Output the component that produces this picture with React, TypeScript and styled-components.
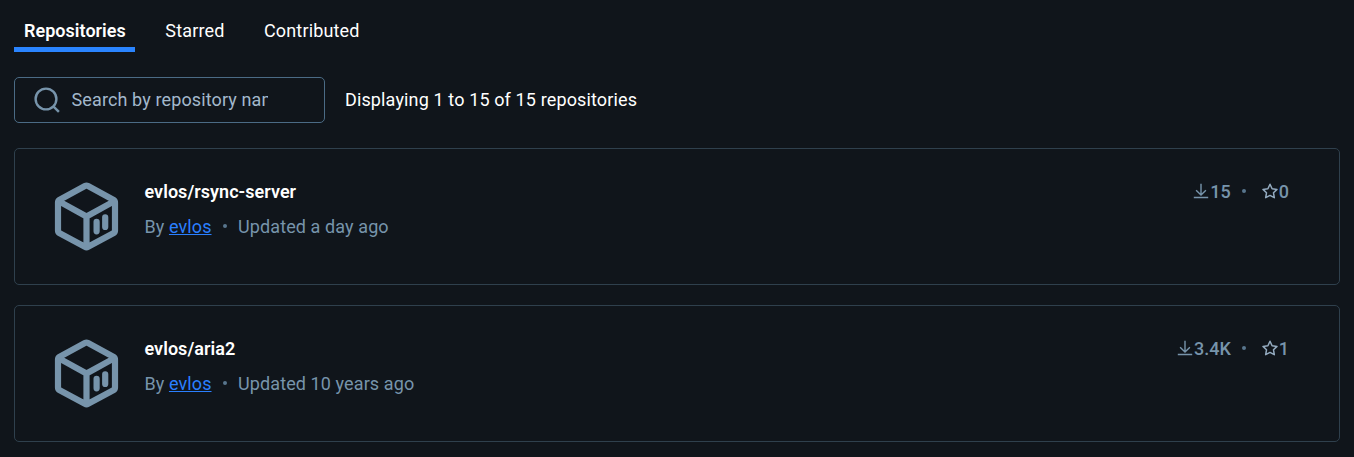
import React from "react";
import styled, { createGlobalStyle } from "styled-components";

const GlobalStyle = createGlobalStyle`
  * { box-sizing: border-box; }
  body {
    margin: 0;
    background: #10151b;
    color: #fff;
    font-family: Roboto, "Liberation Sans", sans-serif;
    font-size: 18px;
    line-height: 25px;
  }
`;

const Page = styled.main`
  height: 457px;
  padding: 0 14px;
  overflow: hidden;
`;

const Tabs = styled.nav`
  display: flex;
  gap: 20px;
  height: 52px;
`;

const Tab = styled.button<{ $active?: boolean }>`
  height: 52px;
  padding: 14px 9.5px 0 10px;
  border: 0;
  border-bottom: 5px solid ${(p) => (p.$active ? "#2a84ff" : "transparent")};
  background: none;
  color: #fff;
  font: inherit;
  font-weight: ${(p) => (p.$active ? 600 : 450)};
  letter-spacing: ${(p) => (p.$active ? "0.03px" : "0.15px")};
  white-space: nowrap;
`;

const Toolbar = styled.div`
  display: flex;
  align-items: center;
  gap: 20px;
  margin: 25px 0;
`;

const SearchBox = styled.label`
  display: flex;
  align-items: center;
  gap: 11.5px;
  width: 311px;
  height: 46px;
  padding: 0 56.5px 0 18px;
  border: 1px solid #4b6b85;
  border-radius: 5px;
`;

const SearchInput = styled.input`
  flex: 1;
  min-width: 0;
  padding: 0 0 2px;
  border: 0;
  outline: 0;
  background: none;
  color: #fff;
  font: inherit;
  letter-spacing: 0.12px;
  &::placeholder { color: #a3b8cc; opacity: 1; }
`;

const Summary = styled.span`
  padding-bottom: 2px;
  font-weight: 450;
  letter-spacing: 0.13px;
`;

const List = styled.section`
  display: flex;
  flex-direction: column;
  gap: 20px;
`;

const Card = styled.article`
  display: flex;
  height: 137px;
  padding: 30px 50px 0 35px;
  border: 1px solid #2f404d;
  border-radius: 5px;
`;

const Details = styled.div`
  flex: 1;
  margin-left: 20.5px;
`;

const Name = styled.h2`
  margin: 0 0 10px;
  font-size: inherit;
  font-weight: 600;
  letter-spacing: 0.04px;
`;

const Meta = styled.div`
  display: flex;
  color: #7794ab;
  letter-spacing: 0.1px;
`;

const Owner = styled.a`
  margin-left: 4.5px;
  color: #2a7fff;
  text-decoration: underline;
`;

const Dot = styled.i<{ $left: number; $right: number }>`
  width: 4px;
  height: 4px;
  margin: 10px ${(p) => p.$right}px 0 ${(p) => p.$left}px;
  border-radius: 50%;
  background: #58758d;
`;

const Stats = styled.div`
  display: flex;
  color: #7794ab;
  font-weight: 500;
`;

const Stat = styled.span`
  display: flex;
  height: 25px;
  svg { margin-top: 4px; }
`;

const SearchIcon = () => (
  <svg width="27" height="28" viewBox="0 0 27 28" fill="none" stroke="#7794ab" strokeWidth="2.4">
    <circle cx="13" cy="13" r="10.4" />
    <path d="m20.3 20.3 5.6 5.6" />
  </svg>
);

const CubeIcon = () => (
  <svg width="74" height="74" viewBox="0 0 74 74" fill="none" stroke="#7794ab" strokeLinejoin="round" strokeLinecap="round">
    <path
      strokeWidth="6.2"
      d="M34.9 7.1 9.7 20.7Q8 21.7 8 23.6V51.5Q8 53.3 9.7 54.3L34.9 67.8Q36.5 68.7 38.1 67.8L63.3 54.3Q65 53.3 65 51.5V23.6Q65 21.7 63.3 20.7L38.1 7.1Q36.5 6.3 34.9 7.1ZM9.5 22.6 36.5 37.5 63.5 22.6M36.5 37.5V67"
    />
    <path strokeWidth="6.2" d="M46.6 42.8V52.3M55.2 38.3V47.9" />
  </svg>
);

const DownloadIcon = () => (
  <svg width="17" height="17" viewBox="0 0 17 17" fill="none" stroke="currentColor" strokeWidth="1.4">
    <path d="M8 .8v11M3.1 7.2 8 12l4.9-4.8M.8 14.5h14.4" />
  </svg>
);

const StarIcon = () => (
  <svg width="17" height="17" viewBox="0 0 17 17" fill="none" stroke="#94abc0" strokeWidth="1.5" strokeLinejoin="round">
    <path d="m8 1.3 2.1 4.4 4.9.7-3.5 3.4.8 4.9L8 12.4l-4.3 2.3.8-4.9L1 6.4l4.9-.7z" />
  </svg>
);

const repositories = [
  { name: "evlos/rsync-server", updated: "Updated a day ago", pulls: "15", stars: "0" },
  { name: "evlos/aria2", updated: "Updated 10 years ago", pulls: "3.4K", stars: "1" },
];

export default function App() {
  return (
    <Page>
      <GlobalStyle />
      <Tabs>
        <Tab $active>Repositories</Tab>
        <Tab>Starred</Tab>
        <Tab>Contributed</Tab>
      </Tabs>
      <Toolbar>
        <SearchBox>
          <SearchIcon />
          <SearchInput placeholder="Search by repository name" />
        </SearchBox>
        <Summary>Displaying 1 to 15 of 15 repositories</Summary>
      </Toolbar>
      <List>
        {repositories.map((repo) => (
          <Card key={repo.name}>
            <CubeIcon />
            <Details>
              <Name>{repo.name}</Name>
              <Meta>
                <span>By</span>
                <Owner>evlos</Owner>
                <Dot $left={11} $right={11.5} />
                <span>{repo.updated}</span>
              </Meta>
            </Details>
            <Stats>
              <Stat>
                <DownloadIcon />
                {repo.pulls}
              </Stat>
              <Dot $left={11} $right={16} />
              <Stat>
                <StarIcon />
                {repo.stars}
              </Stat>
            </Stats>
          </Card>
        ))}
      </List>
    </Page>
  );
}
